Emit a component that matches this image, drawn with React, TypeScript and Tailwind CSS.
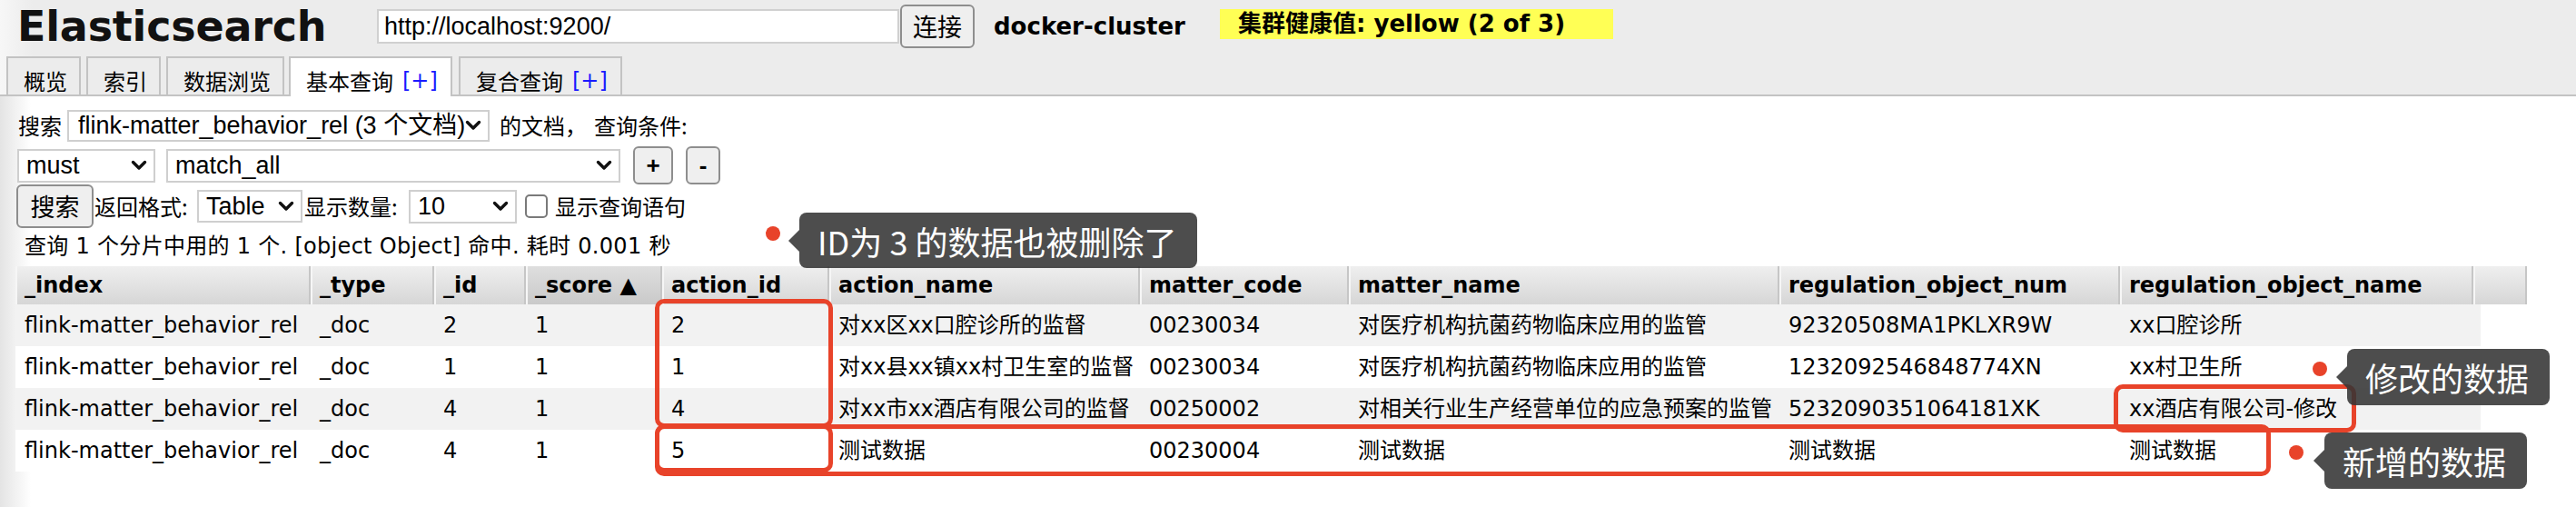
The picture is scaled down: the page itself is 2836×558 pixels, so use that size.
import type { ReactNode } from 'react'

const formFont = "font-['Liberation_Sans','Noto_Sans_CJK_SC',sans-serif]"
const cjkFont = "font-['Noto_Sans_CJK_SC','Liberation_Sans',sans-serif]"
const verdana = "font-['DejaVu_Sans','Noto_Sans_CJK_SC',sans-serif]"

interface Column {
  title: string
  width: string
  sorted?: boolean
}

const columns: Column[] = [
  { title: '_index', width: 'w-[325px]' },
  { title: '_type', width: 'w-[136px]' },
  { title: '_id', width: 'w-[101px]' },
  { title: '_score ▲', width: 'w-[150px]', sorted: true },
  { title: 'action_id', width: 'w-[184px]' },
  { title: 'action_name', width: 'w-[342px]' },
  { title: 'matter_code', width: 'w-[230px]' },
  { title: 'matter_name', width: 'w-[474px]' },
  { title: 'regulation_object_num', width: 'w-[375px]' },
  { title: 'regulation_object_name', width: 'w-[389px]' },
]

const rows: string[][] = [
  ['flink-matter_behavior_rel', '_doc', '2', '1', '2', '对xx区xx口腔诊所的监督', '00230034', '对医疗机构抗菌药物临床应用的监管', '92320508MA1PKLXR9W', 'xx口腔诊所'],
  ['flink-matter_behavior_rel', '_doc', '1', '1', '1', '对xx县xx镇xx村卫生室的监督', '00230034', '对医疗机构抗菌药物临床应用的监管', '1232092546848774XN', 'xx村卫生所'],
  ['flink-matter_behavior_rel', '_doc', '4', '1', '4', '对xx市xx酒店有限公司的监督', '00250002', '对相关行业生产经营单位的应急预案的监管', '5232090351064181XK', 'xx酒店有限公司-修改'],
  ['flink-matter_behavior_rel', '_doc', '4', '1', '5', '测试数据', '00230004', '测试数据', '测试数据', '测试数据'],
]

const Chevron = () => (
  <svg width="18" height="12" viewBox="0 0 18 12" className="shrink-0">
    <path d="M2.5 2.5 L9 9 L15.5 2.5" fill="none" stroke="#111" strokeWidth="3.4" strokeLinecap="round" strokeLinejoin="round" />
  </svg>
)

interface SelectBoxProps {
  text: string
  className: string
}

const SelectBox = ({ text, className }: SelectBoxProps) => (
  <div className={`flex items-center justify-between border-2 border-[#cfcfcf] bg-white pl-[8px] pr-[7px] text-[27px] leading-none text-black ${formFont} ${className}`}>
    <span className="whitespace-nowrap">{text}</span>
    <Chevron />
  </div>
)

const Button = ({ children, className }: { children: ReactNode; className: string }) => (
  <div className={`flex items-center justify-center rounded-[6px] border-2 border-[#8e8e8e] bg-[#efefef] text-black ${className}`}>
    {children}
  </div>
)

interface TabProps {
  label: string
  plus?: boolean
  active?: boolean
  className: string
}

const Tab = ({ label, plus, active, className }: TabProps) => (
  <div
    className={`flex h-[42px] items-start border-2 border-b-0 border-[#c3c3c3] pl-[17px] pt-[13px] text-[24px] leading-[24px] text-black ${cjkFont} ${
      active ? '-mb-[2px] h-[44px] bg-white' : 'bg-[#ececec]'
    } ${className}`}
  >
    <span>{label}</span>
    {plus && <span className={`ml-[10px] text-[#1a1aff] ${verdana}`}>[+]</span>}
  </div>
)

const RedBox = ({ className }: { className: string }) => (
  <div className={`absolute rounded-[10px] border-[5px] border-[#e8432a] ${className}`} />
)

interface NoteProps {
  text: string
  dot: string
  arrow: string
  box: string
}

const Note = ({ text, dot, arrow, box }: NoteProps) => (
  <>
    <div className={`absolute h-[16px] w-[16px] rounded-full bg-[#e8432a] ${dot}`} />
    <div className={`absolute h-0 w-0 border-y-[12px] border-r-[12px] border-y-transparent border-r-[rgba(52,52,52,0.88)] ${arrow}`} />
    <div className={`absolute flex items-center rounded-[8px] bg-[rgba(52,52,52,0.88)] pl-[20px] text-[36px] leading-none text-white ${cjkFont} ${box}`}>
      {text}
    </div>
  </>
)

export default function App() {
  return (
    <div className="relative h-[558px] w-[2836px] overflow-hidden bg-white">
      {/* header */}
      <div className="flex h-[106px] flex-col border-b-2 border-[#c3c3c3] bg-[linear-gradient(to_right,#f7f7f7_0px,#ececec_36px)]">
        <div className="flex h-[58px] items-center">
          <div className={`w-[415px] pl-[19px] text-[46px] font-bold leading-none tracking-[-0.2px] text-[#111] ${verdana}`}>
            Elasticsearch
          </div>
          <div className={`flex h-[38px] w-[575px] items-center border-2 border-[#d0d0d0] bg-white pl-[6px] text-[27px] text-black ${formFont}`}>
            http://localhost:9200/
          </div>
          <Button className={`ml-[1px] h-[48px] w-[82px] text-[27px] ${cjkFont}`}>连接</Button>
          <div className={`w-[270px] pl-[21px] text-[26px] font-bold text-black ${verdana}`}>docker-cluster</div>
          <div className={`-mt-[6px] flex h-[33px] w-[433px] items-center bg-[#ffff55] pl-[20px] text-[26px] font-bold leading-none text-black ${verdana}`}>
            集群健康值: yellow (2 of 3)
          </div>
        </div>
        <div className="mt-auto flex items-end">
          <Tab label="概览" className="ml-[7px] w-[82px]" />
          <Tab label="索引" className="ml-[6px] w-[82px]" />
          <Tab label="数据浏览" className="ml-[6px] w-[130px]" />
          <Tab label="基本查询" plus active className="ml-[5px] w-[180px]" />
          <Tab label="复合查询" plus className="ml-[7px] w-[180px]" />
        </div>
      </div>

      {/* query form */}
      <div className="h-[452px] bg-[linear-gradient(to_right,#e4e4e4_0px,#ffffff_34px)]">
        <div className={`flex h-[34px] items-center pt-0 text-[24px] text-black ${cjkFont} translate-y-[15px]`}>
          <span className="ml-[20px] w-[54px]">搜索</span>
          <SelectBox text="flink-matter_behavior_rel (3 个文档)" className="h-[35px] w-[465px] pl-[10px]" />
          <span className="ml-[11px]">的文档，</span>
          <span className="ml-[8px]">查询条件:</span>
        </div>
        <div className="mt-[21px] flex h-[42px] items-center">
          <SelectBox text="must" className="ml-[19px] h-[37px] w-[152px]" />
          <SelectBox text="match_all" className="ml-[12px] h-[37px] w-[500px]" />
          <Button className={`ml-[14px] h-[42px] w-[44px] text-[26px] font-bold ${formFont}`}>+</Button>
          <Button className={`ml-[14px] h-[42px] w-[38px] text-[26px] font-bold ${formFont}`}>-</Button>
        </div>
        <div className={`flex h-[48px] items-center text-[24px] text-black ${cjkFont}`}>
          <Button className={`ml-[18px] h-[48px] w-[85px] text-[27px] ${cjkFont}`}>搜索</Button>
          <span className="ml-[1px] w-[113px]">返回格式:</span>
          <SelectBox text="Table" className="h-[36px] w-[116px]" />
          <span className="ml-[2px] w-[115px]">显示数量:</span>
          <SelectBox text="10" className="h-[37px] w-[119px]" />
          <div className="ml-[9px] h-[26px] w-[25px] rounded-[5px] border-2 border-[#7a7a7a] bg-white" />
          <span className="ml-[8px]">显示查询语句</span>
        </div>
        <div className={`mt-[8px] h-[24px] pl-[27px] text-[24px] leading-[24px] tracking-[0.3px] text-black ${verdana}`}>
          查询 1 个分片中用的 1 个. [object Object] 命中. 耗时 0.001 秒
        </div>

        {/* results table */}
        <div className={`ml-[17px] mt-[10px] text-[24px] text-black ${verdana}`}>
          <div className="flex h-[42px]">
            {columns.map((col) => (
              <div
                key={col.title}
                className={`flex items-center border-r-2 border-r-[#c6c6c6] border-l-2 border-l-[#f6f6f6] pl-[8px] font-bold ${col.width} ${
                  col.sorted
                    ? 'bg-[linear-gradient(#dedede,#c9c9c9)]'
                    : 'bg-[linear-gradient(#efefef,#d6d6d6)]'
                }`}
              >
                {col.title}
              </div>
            ))}
            <div className="w-[59px] border-r-2 border-r-[#c6c6c6] border-l-2 border-l-[#f6f6f6] bg-[linear-gradient(#efefef,#d6d6d6)]" />
          </div>
          {rows.map((row, i) => (
            <div key={i} className={`flex h-[46px] w-[2714px] ${i % 2 === 0 ? 'bg-[#f2f2f2]' : 'bg-white'}`}>
              {row.map((cell, j) => (
                <div key={j} className={`flex items-center whitespace-nowrap pl-[10px] ${columns[j].width}`}>
                  {cell}
                </div>
              ))}
            </div>
          ))}
        </div>
      </div>

      {/* annotations */}
      <RedBox className="left-[721px] top-[329px] h-[142px] w-[196px]" />
      <RedBox className="left-[721px] top-[467px] h-[53px] w-[196px]" />
      <RedBox className="left-[721px] top-[467px] h-[57px] w-[1779px]" />
      <RedBox className="left-[2327px] top-[423px] h-[53px] w-[267px]" />

      <Note
        text="ID为 3 的数据也被删除了"
        dot="left-[843px] top-[249px]"
        arrow="left-[868px] top-[253px]"
        box="left-[880px] top-[234px] h-[61px] w-[438px]"
      />
      <Note
        text="修改的数据"
        dot="left-[2546px] top-[398px]"
        arrow="left-[2572px] top-[403px]"
        box="left-[2584px] top-[384px] h-[62px] w-[223px]"
      />
      <Note
        text="新增的数据"
        dot="left-[2520px] top-[490px]"
        arrow="left-[2547px] top-[495px]"
        box="left-[2559px] top-[476px] h-[62px] w-[223px]"
      />
    </div>
  )
}
